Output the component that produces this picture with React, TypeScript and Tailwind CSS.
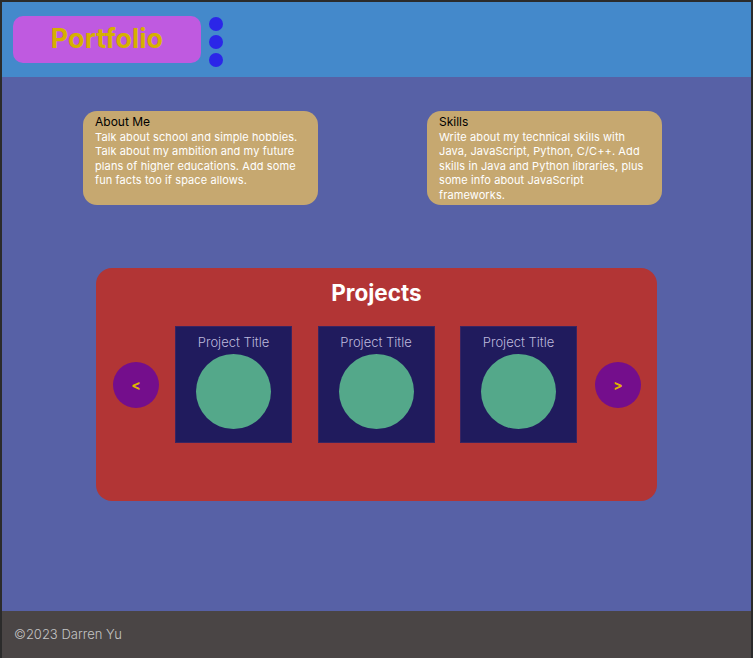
import React from 'react';

const projects = ['Project Title', 'Project Title', 'Project Title'];

function InfoCard({ title, text }: { title: string; text: string }) {
  return (
    <div className="w-[235px] h-[94px] bg-[#c6a870] rounded-[14px] px-[12px] pt-[4px]">
      <h2 className="text-[12px] leading-[14px] text-black">{title}</h2>
      <p className="text-[11px] leading-[14.4px] text-white mt-[1px] tracking-[0.1px]">{text}</p>
    </div>
  );
}

function ArrowButton({ label }: { label: string }) {
  return (
    <button className="w-[46px] h-[46px] rounded-full bg-[#740e8c] text-[#e0b400] font-bold text-[14px] flex items-center justify-center shrink-0">
      {label}
    </button>
  );
}

export default function App() {
  return (
    <div
      className="w-[753px] h-[658px] bg-[#2b2b2b] px-[2px] pt-[2px] flex flex-col"
      style={{ fontFamily: 'Inter, "Noto Sans", sans-serif' }}
    >
      <header className="h-[75px] bg-[#4489cb] flex items-start pl-[11px] pt-[14px] gap-[8px] shrink-0">
        <div className="w-[188px] h-[47px] bg-[#bf5ae0] rounded-[10px] flex items-center justify-center">
          <span className="text-[27px] font-bold text-[#d6b000]">Portfolio</span>
        </div>
        <div className="flex flex-col gap-[4px] pt-[1px]">
          <span className="w-[14px] h-[14px] rounded-full bg-[#2b26e8]" />
          <span className="w-[14px] h-[14px] rounded-full bg-[#2b26e8]" />
          <span className="w-[14px] h-[14px] rounded-full bg-[#2b26e8]" />
        </div>
      </header>

      <main className="flex-1 bg-[#5761a6] pt-[34px]">
        <div className="flex pl-[81px] gap-[109px]">
          <InfoCard
            title="About Me"
            text="Talk about school and simple hobbies. Talk about my ambition and my future plans of higher educations. Add some fun facts too if space allows."
          />
          <InfoCard
            title="Skills"
            text="Write about my technical skills with Java, JavaScript, Python, C/C++. Add skills in Java and Python libraries, plus some info about JavaScript frameworks."
          />
        </div>

        <section className="mt-[63px] ml-[94px] w-[561px] h-[233px] bg-[#b23535] rounded-[16px] pt-[12px]">
          <h2 className="text-center text-white font-bold text-[22.5px] leading-[26px]">Projects</h2>
          <div className="flex items-center mt-[20px] pl-[17px]">
            <ArrowButton label="<" />
            <div className="flex gap-[25.5px] ml-[16px] mr-[18px]">
              {projects.map((p, i) => (
                <div
                  key={i}
                  className="w-[117px] h-[117px] bg-[#201b5d] border border-[#3a2460] flex flex-col items-center pt-[7px]"
                >
                  <span className="text-[13px] leading-[16px] font-light text-[#bdb9dc]">{p}</span>
                  <span className="mt-[4px] w-[75px] h-[75px] rounded-full bg-[#54a88a]" />
                </div>
              ))}
            </div>
            <ArrowButton label=">" />
          </div>
        </section>
      </main>

      <footer className="h-[47px] bg-[#4a4545] flex items-center pl-[12px] shrink-0">
        <span className="text-[13px] font-light text-[#c4c4c4]">©2023 Darren Yu</span>
      </footer>
    </div>
  );
}
